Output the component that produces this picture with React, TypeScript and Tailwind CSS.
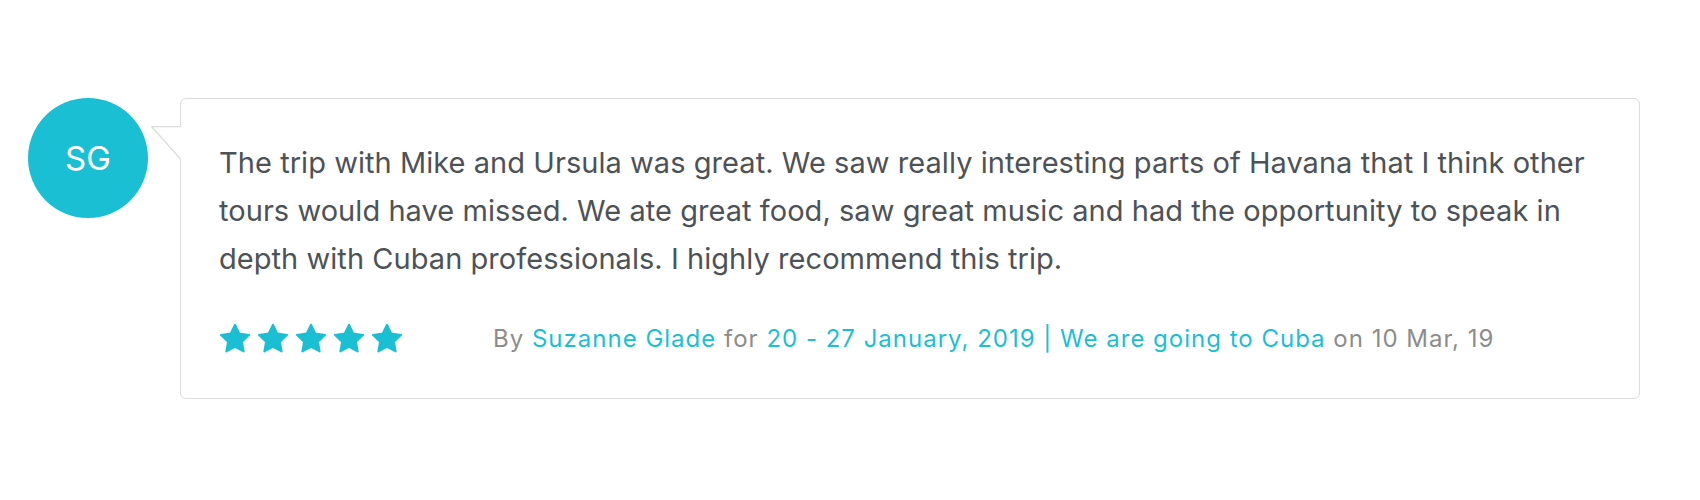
import React from "react";

const Star = () => (
  <svg width="32" height="32" viewBox="0 0 24 24" className="shrink-0">
    <path
      d="M12 1.3l3.2 6.6 7.4 1-5.4 5.1 1.3 7.3L12 17.9l-6.5 3.4 1.3-7.3-5.4-5.1 7.4-1z"
      fill="#1bbfd4"
      stroke="#1bbfd4"
      strokeWidth="1.5"
      strokeLinejoin="round"
    />
  </svg>
);

export default function App() {
  return (
    <div
      className="w-[1700px] h-[500px] bg-white flex items-start pl-[28px] pt-[98px]"
      style={{ fontFamily: "Inter, 'Noto Sans', sans-serif" }}
    >
      <div className="w-[120px] h-[120px] rounded-full bg-[#1bbfd4] flex items-center justify-center shrink-0">
        <span className="text-white text-[33px] leading-none">SG</span>
      </div>
      <div className="relative ml-[32px] w-[1460px] border border-[#dcdcdc] rounded-[6px] bg-white pl-[38px] pr-[40px] pt-[40px] pb-[39px]">
        <svg
          width="31"
          height="36"
          viewBox="0 0 31 36"
          className="absolute left-[-30px] top-[27px]"
        >
          <polygon points="0.5,0.5 31,0.5 31,34 29.5,33" fill="#ffffff" />
          <polyline
            points="30.5,0.5 0.5,0.5 29.5,33"
            fill="none"
            stroke="#dcdcdc"
            strokeWidth="1.3"
          />
        </svg>
        <p className="text-[#4d5257] text-[29px] leading-[48px] tracking-[0.05px] mb-[36px]">
          The trip with Mike and Ursula was great. We saw really interesting parts of Havana that I think other tours would have missed. We ate great food, saw great music and had the opportunity to speak in depth with Cuban professionals. I highly recommend this trip.
        </p>
        <div className="flex items-center h-[40px]">
          <div className="flex gap-[6px] w-[274px] shrink-0">
            <Star />
            <Star />
            <Star />
            <Star />
            <Star />
          </div>
          <div className="text-[24px] tracking-[1px] text-[#8c8c8c] whitespace-nowrap">
            By <span className="text-[#1bbfd4]">Suzanne Glade</span> for{" "}
            <span className="text-[#1bbfd4]">20 - 27 January, 2019 | We are going to Cuba</span>{" "}
            on 10 Mar, 19
          </div>
        </div>
      </div>
    </div>
  );
}
